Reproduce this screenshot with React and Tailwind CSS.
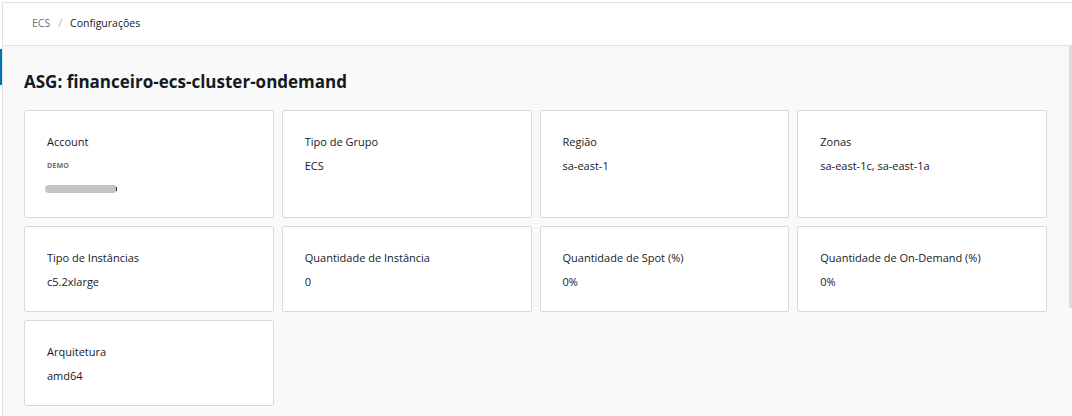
const cards = [
  { label: "Account", account: true },
  { label: "Tipo de Grupo", value: "ECS" },
  { label: "Região", value: "sa-east-1" },
  { label: "Zonas", value: "sa-east-1c, sa-east-1a" },
  { label: "Tipo de Instâncias", value: "c5.2xlarge" },
  { label: "Quantidade de Instância", value: "0" },
  { label: "Quantidade de Spot (%)", value: "0%" },
  { label: "Quantidade de On-Demand (%)", value: "0%" },
  { label: "Arquitetura", value: "amd64" },
];

function InfoCard({ card }) {
  return (
    <div className="bg-white border border-[#d5dbdb] rounded-[2px] px-[22px] pt-[23px] pb-[21px]">
      <div className="text-[11px] leading-[16px] text-[#16191f]">{card.label}</div>
      {card.account ? (
        <div className="mt-[10px]">
          <div className="text-[7px] leading-[12px] font-bold tracking-wide text-[#687078]">DEMO</div>
          <div className="mt-[9px] flex items-center h-[15px] ml-[-2px]">
            <div className="w-[72px] h-[8px] rounded-full bg-[#c4c4c4]" />
            <div className="w-[1px] h-[4px] bg-[#333] ml-[-1px]" />
          </div>
        </div>
      ) : (
        <div className="mt-[8px] text-[11px] leading-[16px] text-[#16191f]">{card.value}</div>
      )}
    </div>
  );
}

export default function App() {
  return (
    <div
      className="relative min-h-screen bg-white pt-[2px] pl-[2px]"
      style={{ fontFamily: '"Open Sans", "Noto Sans", sans-serif' }}
    >
      {/* active nav marker */}
      <div className="absolute left-0 top-[49px] w-[2px] h-[36px] bg-[#0073bb]" />

      <div className="border-l border-t border-[#e1e1e1] min-h-[414px] flex flex-col">
        <div className="h-[43px] shrink-0 border-b border-[#e1e1e1] bg-white flex items-center pl-[29px] text-[10.5px] text-[#16191f]">
          <span className="text-[#687078]">ECS</span>
          <span className="mx-[8px] text-[#aab7b8]">/</span>
          <span>Configurações</span>
        </div>

        <div className="flex flex-1 bg-[#f9f9f9]">
          <div className="flex-1 pl-[21px] pr-[22px] pt-[24px] pb-[10px]">
            <h1 className="text-[17px] leading-[24px] font-bold text-[#16191f] mb-[16px]">
              ASG: financeiro-ecs-cluster-ondemand
            </h1>
            <div className="grid grid-cols-4 gap-[8px]">
              {cards.map((c) => (
                <InfoCard key={c.label} card={c} />
              ))}
            </div>
          </div>
          <div className="w-[3px] shrink-0">
            <div className="h-[262px] bg-[#dcdcdc] rounded-bl-[2px]" />
          </div>
        </div>
      </div>
    </div>
  );
}
